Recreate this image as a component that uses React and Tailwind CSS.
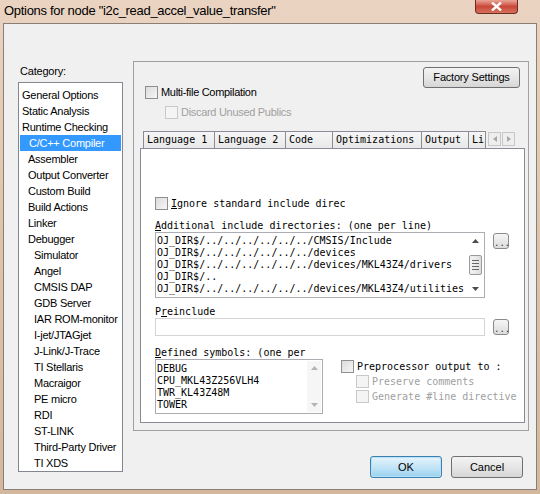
import React from 'react';

const ui = { fontFamily: 'Tahoma, "Liberation Sans", Arial, sans-serif' };
const mono = { fontFamily: '"DejaVu Sans Mono", "Liberation Mono", monospace' };

const categories = [
  ['General Options', 0],
  ['Static Analysis', 0],
  ['Runtime Checking', 0],
  ['C/C++ Compiler', 1, true],
  ['Assembler', 1],
  ['Output Converter', 1],
  ['Custom Build', 1],
  ['Build Actions', 1],
  ['Linker', 1],
  ['Debugger', 1],
  ['Simulator', 2],
  ['Angel', 2],
  ['CMSIS DAP', 2],
  ['GDB Server', 2],
  ['IAR ROM-monitor', 2],
  ['I-jet/JTAGjet', 2],
  ['J-Link/J-Trace', 2],
  ['TI Stellaris', 2],
  ['Macraigor', 2],
  ['PE micro', 2],
  ['RDI', 2],
  ['ST-LINK', 2],
  ['Third-Party Driver', 2],
  ['TI XDS', 2],
];

const tabs = [
  ['Language 1', 'w-[72px]'],
  ['Language 2', 'w-[72px]'],
  ['Code', 'w-[48px]'],
  ['Optimizations', 'w-[90px]'],
  ['Output', 'w-[48px]'],
  ['Li', 'w-[18px]'],
];

const includes = [
  'OJ_DIR$/../../../../../../CMSIS/Include',
  'OJ_DIR$/../../../../../../devices',
  'OJ_DIR$/../../../../../../devices/MKL43Z4/drivers',
  'OJ_DIR$/..',
  'OJ_DIR$/../../../../../../devices/MKL43Z4/utilities',
];

const symbols = ['DEBUG', 'CPU_MKL43Z256VLH4', 'TWR_KL43Z48M', 'TOWER'];

function Check({ disabled }) {
  return (
    <span
      className={`inline-block w-[13px] h-[13px] shrink-0 border ${
        disabled
          ? 'border-[#c9c9c9] bg-[#f4f4f4]'
          : 'border-[#8e8f8f] bg-gradient-to-br from-[#dcdcdc] to-[#f6f6f6]'
      }`}
    />
  );
}

function Browse() {
  return (
    <button className="w-[16px] h-[16px] rounded-[3px] border border-[#8a8a8a] bg-gradient-to-b from-[#f6f6f6] to-[#dcdcdc] text-[9px] leading-[14px] text-[#333] pt-[2px]">
      ...
    </button>
  );
}

function Arrow({ up, faded }) {
  return (
    <svg width="7" height="4" viewBox="0 0 7 4">
      <path d={up ? 'M0 4 L3.5 0 L7 4 Z' : 'M0 0 L3.5 4 L7 0 Z'} fill={faded ? '#b5b5b5' : '#4d4d4d'} />
    </svg>
  );
}

export default function App() {
  return (
    <div className="w-[540px] h-[494px] overflow-hidden bg-gradient-to-b from-[#ead3c1] via-[#dcc3aa] to-[#d3b89d] px-[3px]" style={ui}>
      <div className="h-[23px] flex items-start justify-between">
        <div className="pl-[1px] pt-[1px] text-[13px] leading-[20px] text-black tracking-[-0.3px]">
          Options for node "i2c_read_accel_value_transfer"
        </div>
        <div className="mr-[19px] w-[43px] h-[14px] rounded-b-[4px] border border-t-0 border-[#6b2c22] bg-gradient-to-b from-[#e9a598] via-[#c9473a] to-[#d5705c] flex items-center justify-center">
          <svg width="11" height="9" viewBox="0 0 11 9">
            <path d="M1 0.5 L10 8.5 M10 0.5 L1 8.5" stroke="#fff" strokeWidth="2.4" />
          </svg>
        </div>
      </div>

      <div className="h-[467px] w-[534px] border border-[#8b7f74] bg-[#f0f0f0] flex">
        <div className="ml-[14px] mt-[40px] w-[105px] flex flex-col">
          <div className="text-[11px] leading-[14px] pl-[2px] text-black tracking-[-0.2px]">Category:</div>
          <div className="mt-[4px] h-[390px] border border-[#828790] bg-white pt-[4px]">
            {categories.map(([name, level, sel]) => (
              <div
                key={name}
                className={`h-[16px] text-[11px] leading-[16px] tracking-[-0.25px] whitespace-nowrap ${
                  level === 0 ? 'pl-[3px]' : level === 1 ? 'pl-[9px]' : 'pl-[15px]'
                } ${sel ? 'bg-[#3399ff] text-white ml-[1px] mr-[1px]' : 'text-black'}`}
              >
                {name}
              </div>
            ))}
          </div>
        </div>

        <div className="ml-[10px] mt-[37px] flex flex-col">
          <div className="w-[396px] h-[370px] border border-[#a0a0a0] flex flex-col">
            <div className="flex justify-between">
              <div className="pl-[11px] pt-[24px] flex flex-col">
                <div className="flex items-center h-[13px] gap-[3px]">
                  <Check />
                  <span className="text-[11px] leading-[13px] tracking-[-0.3px] text-black">Multi-file Compilation</span>
                </div>
                <div className="flex items-center h-[13px] gap-[3px] mt-[7px] ml-[20px]">
                  <Check disabled />
                  <span className="text-[11px] leading-[13px] tracking-[-0.3px] text-[#a0a0a0]">Discard Unused Publics</span>
                </div>
              </div>
              <button className="mt-[5px] mr-[8px] w-[97px] h-[21px] rounded-[3px] border border-[#707070] bg-gradient-to-b from-[#f3f3f3] via-[#e6e6e6] to-[#d6d6d6] text-[11px] leading-[19px] tracking-[-0.2px] text-black">
                Factory Settings
              </button>
            </div>

            <div className="mt-[12px] ml-[9px] flex items-end h-[17px]">
              {tabs.map(([t, w]) => (
                <div
                  key={t}
                  className={`${w} h-[17px] border border-b-0 border-[#898c95] bg-gradient-to-b from-[#f6f6f6] to-[#e8e8e8] text-[10px] leading-[16px] pl-[3px] text-black overflow-hidden whitespace-nowrap mr-[-1px]`}
                  style={mono}
                >
                  {t}
                </div>
              ))}
              <div className="ml-[3px] mb-[2px] flex gap-[1px]">
                <div className="w-[13px] h-[14px] border border-[#c7c7c7] bg-[#eeeeee] flex items-center justify-center">
                  <svg width="4" height="6" viewBox="0 0 4 6"><path d="M4 0 L0 3 L4 6 Z" fill="#a8a8a8" /></svg>
                </div>
                <div className="w-[13px] h-[14px] border border-[#c7c7c7] bg-[#eeeeee] flex items-center justify-center">
                  <svg width="4" height="6" viewBox="0 0 4 6"><path d="M0 0 L4 3 L0 6 Z" fill="#a8a8a8" /></svg>
                </div>
              </div>
            </div>

            <div className="ml-[6px] w-[385px] h-[275px] border border-[#898c95] bg-white flex flex-col pl-[14px] text-[10px] text-black" style={mono}>
              <div className="mt-[48px] flex items-center gap-[3px] h-[13px]">
                <Check />
                <span className="leading-[13px]"><span className="underline">I</span>gnore standard include direc</span>
              </div>
              <div className="mt-[9px] leading-[13px]">
                <span className="underline">A</span>dditional include directories: (one per line)
              </div>
              <div className="flex items-start">
                <div className="w-[330px] h-[66px] border border-[#abadb3] flex">
                  <div className="flex-1 pl-[1px] pt-[2px] overflow-hidden">
                    {includes.map((l, i) => (
                      <div key={i} className="h-[12px] leading-[12px] whitespace-nowrap">{l}</div>
                    ))}
                  </div>
                  <div className="w-[15px] mr-[1px] my-[1px] flex flex-col items-center justify-between py-[5px]">
                    <Arrow up />
                    <div className="w-[13px] h-[20px] border border-[#9a9a9a] rounded-[2px] bg-gradient-to-r from-[#f3f3f3] to-[#dedede] flex flex-col items-center justify-center gap-[2px]">
                      <div className="w-[7px] h-[1px] bg-[#666]" />
                      <div className="w-[7px] h-[1px] bg-[#666]" />
                      <div className="w-[7px] h-[1px] bg-[#666]" />
                      <div className="w-[7px] h-[1px] bg-[#666]" />
                    </div>
                    <Arrow />
                  </div>
                </div>
                <div className="ml-[8px] mt-[1px]"><Browse /></div>
              </div>

              <div className="mt-[7px] leading-[13px]">
                P<span className="underline">r</span>einclude
              </div>
              <div className="flex items-start">
                <div className="w-[330px] h-[18px] border border-[#d5d5d5] bg-white" />
                <div className="ml-[8px] mt-[1px]"><Browse /></div>
              </div>

              <div className="mt-[10px] leading-[13px]">
                <span className="underline">D</span>efined symbols: (one per
              </div>
              <div className="flex items-start">
                <div className="w-[168px] h-[55px] border border-[#abadb3] flex">
                  <div className="flex-1 pl-[1px] pt-[3px] overflow-hidden">
                    {symbols.map((l) => (
                      <div key={l} className="h-[12px] leading-[12px] whitespace-nowrap">{l}</div>
                    ))}
                  </div>
                  <div className="w-[14px] my-[1px] mr-[1px] bg-[#f6f6f6] flex flex-col items-center justify-between py-[5px]">
                    <Arrow up faded />
                    <Arrow faded />
                  </div>
                </div>
                <div className="ml-[18px] flex flex-col">
                  <div className="flex items-center gap-[3px] h-[13px] mt-[1px]">
                    <Check />
                    <span className="leading-[13px] whitespace-nowrap">Preprocessor output to :</span>
                  </div>
                  <div className="flex items-center gap-[3px] h-[13px] mt-[2px] ml-[15px] text-[#a0a0a0]">
                    <Check disabled />
                    <span className="leading-[13px] whitespace-nowrap">Preserve comments</span>
                  </div>
                  <div className="flex items-center gap-[3px] h-[13px] mt-[2px] ml-[15px] text-[#a0a0a0]">
                    <Check disabled />
                    <span className="leading-[13px] whitespace-nowrap">Generate #line directive</span>
                  </div>
                </div>
              </div>
            </div>
          </div>

          <div className="mt-[25px] flex justify-end gap-[9px] pr-[6px]">
            <button className="w-[72px] h-[22px] rounded-[3px] border border-[#3c7fb1] bg-gradient-to-b from-[#e5f4fc] via-[#c4e5f6] to-[#98d1ef] text-[11px] text-black shadow-[inset_0_0_0_1px_#b8e2f7]">
              OK
            </button>
            <button className="w-[72px] h-[22px] rounded-[3px] border border-[#707070] bg-gradient-to-b from-[#f3f3f3] via-[#e6e6e6] to-[#d6d6d6] text-[11px] text-black">
              Cancel
            </button>
          </div>
        </div>
      </div>
    </div>
  );
}
